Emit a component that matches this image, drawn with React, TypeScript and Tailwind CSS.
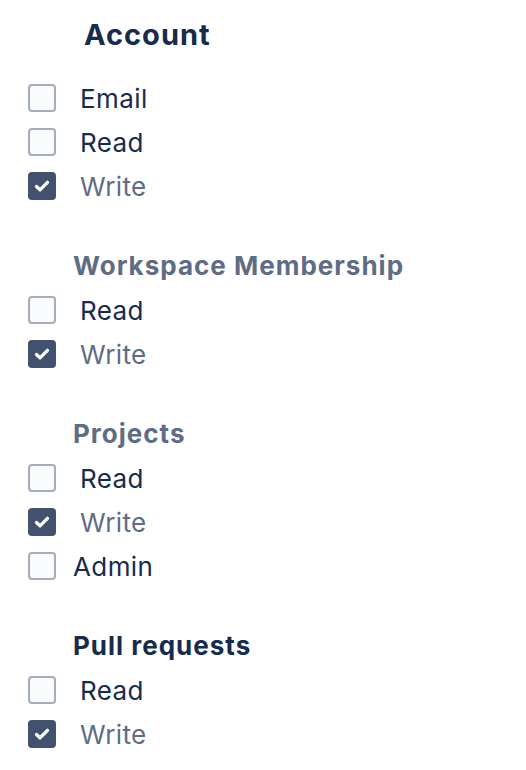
import React from "react";

type Item = { label: string; checked?: boolean; gap?: string };
type Group = { title: string; titleClass: string; titleIndent: string; items: Item[] };

const groups: Group[] = [
  {
    title: "Account",
    titleClass: "text-[29px] tracking-[1px] text-[#172b4d]",
    titleIndent: "ml-[56px]",
    items: [{ label: "Email" }, { label: "Read" }, { label: "Write", checked: true }],
  },
  {
    title: "Workspace Membership",
    titleClass: "text-[26px] tracking-[1px] text-[#5e6c84]",
    titleIndent: "ml-[45px]",
    items: [{ label: "Read" }, { label: "Write", checked: true }],
  },
  {
    title: "Projects",
    titleClass: "text-[26px] tracking-[1px] text-[#5e6c84]",
    titleIndent: "ml-[45px]",
    items: [
      { label: "Read" },
      { label: "Write", checked: true },
      { label: "Admin", gap: "gap-[17px]" },
    ],
  },
  {
    title: "Pull requests",
    titleClass: "text-[26px] tracking-[1px] text-[#172b4d]",
    titleIndent: "ml-[45px]",
    items: [{ label: "Read" }, { label: "Write", checked: true }],
  },
];

function Checkbox({ checked }: { checked?: boolean }) {
  if (checked) {
    return (
      <span className="flex h-[28px] w-[28px] shrink-0 items-center justify-center rounded-[4px] bg-[#42526e]">
        <svg width="22" height="22" viewBox="0 0 24 24" fill="none">
          <path d="M6 12.5l3.8 3.8L18 8" stroke="#fff" strokeWidth="3.6" strokeLinecap="round" strokeLinejoin="round" />
        </svg>
      </span>
    );
  }
  return <span className="h-[28px] w-[28px] shrink-0 rounded-[4px] border-2 border-[#a5adba] bg-[#fafbfc]" />;
}

export default function App() {
  return (
    <div className="min-h-[770px] bg-white pl-[28px] pt-[13px] font-['Inter',sans-serif]">
      <div className="flex flex-col gap-[36px]">
        {groups.map((g, gi) => (
          <div key={g.title}>
            <h3
              className={
                "h-[44px] font-bold leading-[44px] " + g.titleClass + " " + g.titleIndent + (gi === 0 ? " mb-[19px]" : "")
              }
            >
              {g.title}
            </h3>
            {g.items.map((it) => (
              <label key={it.label} className={"flex h-[44px] items-center " + (it.gap ?? "gap-[24px]")}>
                <Checkbox checked={it.checked} />
                <span
                  className={
                    "text-[26px] tracking-[0.4px] " + (it.checked ? "text-[#5e6c84]" : "text-[#172b4d]")
                  }
                >
                  {it.label}
                </span>
              </label>
            ))}
          </div>
        ))}
      </div>
    </div>
  );
}
